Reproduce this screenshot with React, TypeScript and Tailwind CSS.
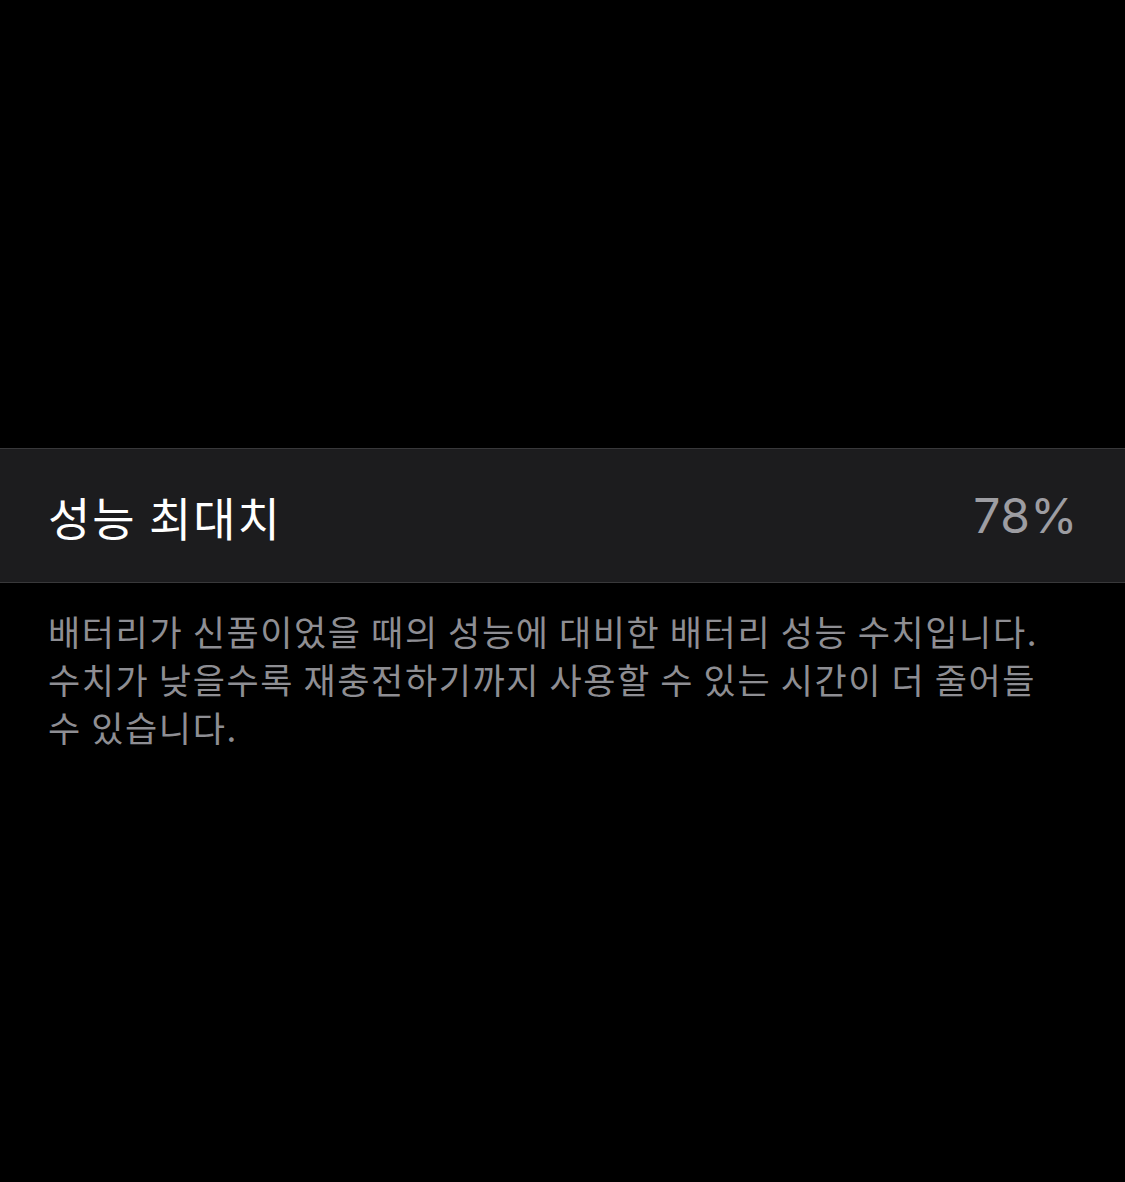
export default function App() {
  const font = { fontFamily: '"Noto Sans CJK KR", "Noto Sans", sans-serif' };
  return (
    <div className="min-h-[1182px] w-full bg-black pt-[448px]" style={font}>
      <div className="flex h-[135px] items-center justify-between border-y border-[#38383a] bg-[#1c1c1e] pl-[48px] pr-[47px]">
        <span className="text-[46px] leading-none tracking-[2px] text-white">성능 최대치</span>
        <span className="font-['Inter',sans-serif] text-[48px] leading-none tracking-[0.5px] text-[#9d9da2]">
          78%
        </span>
      </div>
      <p className="pl-[48px] pr-[40px] pt-[24px] text-[35px] leading-[48px] tracking-[1.6px] text-[#8e8e93]">
        배터리가 신품이었을 때의 성능에 대비한 배터리 성능 수치입니다.
        <br />
        수치가 낮을수록 재충전하기까지 사용할 수 있는 시간이 더 줄어들
        <br />수 있습니다.
      </p>
    </div>
  );
}
